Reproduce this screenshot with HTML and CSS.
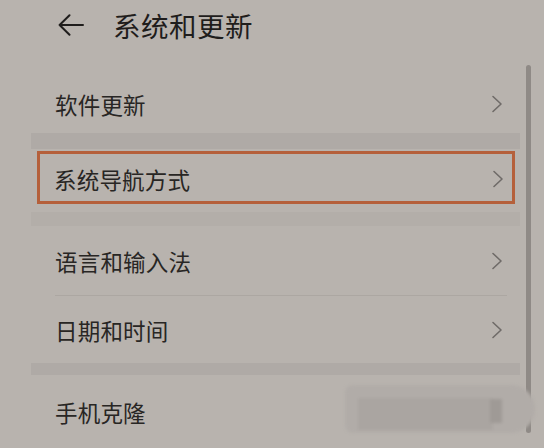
FILE: index.html
```html
<!DOCTYPE html>
<html lang="zh-CN">
<head>
<meta charset="utf-8">
<link rel="stylesheet" href="styles.css">
</head>
<body>
<div class="screen">
  <header class="header">
    <svg class="back" width="26" height="22" viewBox="0 0 26 22"><path d="M11.5 1.2 L1.6 11 L11.5 20.8 M1.6 11 H25" fill="none" stroke="#1f1d1c" stroke-width="2" stroke-linecap="round" stroke-linejoin="round"/></svg>
    <h1 class="title">系统和更新</h1>
  </header>

  <div class="card">
    <div class="row row-1"><span class="label">软件更新</span><svg class="chev" width="12" height="18" viewBox="0 0 12 18"><path d="M2 1.5 L10 9 L2 16.5" fill="none" stroke="#6f6b68" stroke-width="1.6" stroke-linejoin="round" stroke-linecap="round"/></svg></div>
  </div>
  <div class="band band-1"></div>

  <div class="card card-hl">
    <div class="hl-box"><span class="label">系统导航方式</span><svg class="chev" width="12" height="18" viewBox="0 0 12 18"><path d="M2 1.5 L10 9 L2 16.5" fill="none" stroke="#6f6b68" stroke-width="1.6" stroke-linejoin="round" stroke-linecap="round"/></svg></div>
  </div>
  <div class="band band-2"></div>

  <div class="card">
    <div class="row row-3"><span class="label">语言和输入法</span><svg class="chev" width="12" height="18" viewBox="0 0 12 18"><path d="M2 1.5 L10 9 L2 16.5" fill="none" stroke="#6f6b68" stroke-width="1.6" stroke-linejoin="round" stroke-linecap="round"/></svg></div>
    <div class="divider"></div>
    <div class="row row-4"><span class="label">日期和时间</span><svg class="chev" width="12" height="18" viewBox="0 0 12 18"><path d="M2 1.5 L10 9 L2 16.5" fill="none" stroke="#6f6b68" stroke-width="1.6" stroke-linejoin="round" stroke-linecap="round"/></svg></div>
  </div>
  <div class="band band-3"></div>

  <div class="card">
    <div class="row row-5"><span class="label">手机克隆</span></div>
  </div>

  <div class="scrollbar"></div>
  <div class="smudge">
    <div class="smudge-inner"></div>
    <div class="smudge-block"></div>
  </div>
</div>
</body>
</html>
```

FILE: styles.css
```css
html, body {
  margin: 0;
  padding: 0;
  background: #b8b3ae;
}
.screen {
  position: relative;
  width: 544px;
  height: 448px;
  overflow: hidden;
  background: #b8b3ae;
  font-family: "Noto Sans CJK SC", "Noto Sans", sans-serif;
  color: #282624;
}
.header {
  height: 50px;
  display: flex;
  align-items: center;
  padding-left: 58px;
  gap: 29px;
}
.back { display: block; }
.title {
  margin: 0;
  font-size: 27.5px;
  font-weight: 400;
  line-height: 30px;
  letter-spacing: 0.5px;
  color: #1f1d1c;
}
.card {
  margin: 0 24px 0 31px;
}
.card:first-of-type { margin-top: 24px; }
.row {
  display: flex;
  align-items: center;
  justify-content: space-between;
  padding: 0 17px 0 24px;
}
.label {
  font-size: 22.5px;
  line-height: 26px;
  letter-spacing: 0.2px;
}
.chev { display: block; }
.row-1 { height: 59px; }
.row-3 { height: 69px; }
.row-4 { height: 67px; }
.row-5 { height: 74px; }
.divider {
  height: 1px;
  margin: 0 13px 0 24px;
  background: #aca7a2;
}
.band { margin: 0 24px 0 31px; }
.band-1 { height: 16px; background: #afaaa6; }
.band-2 { height: 14px; background: #b3aea9; }
.band-3 { height: 12px; background: #afaaa6; }
.card-hl {
  height: 63px;
  padding: 2px 5px 0 6px;
  box-sizing: border-box;
}
.hl-box {
  height: 53px;
  box-sizing: border-box;
  border: 3.5px solid #b5603b;
  display: flex;
  align-items: center;
  justify-content: space-between;
  padding: 2px 8px 0 14px;
}
.scrollbar {
  position: absolute;
  left: 526px;
  top: 65px;
  width: 5px;
  height: 368px;
  border-radius: 3px;
  background: #8f8a86;
}
.smudge {
  position: absolute;
  left: 345px;
  top: 385px;
  width: 190px;
  height: 48px;
  border-radius: 8px 24px 24px 8px;
  background: #b1aca8;
  filter: blur(1.5px);
}
.smudge-inner {
  position: absolute;
  left: 13px;
  top: 13px;
  width: 135px;
  height: 32px;
  background: #aaa5a1;
}
.smudge-block {
  position: absolute;
  left: 145px;
  top: 14px;
  width: 12px;
  height: 24px;
  background: #9f9a96;
}
```
